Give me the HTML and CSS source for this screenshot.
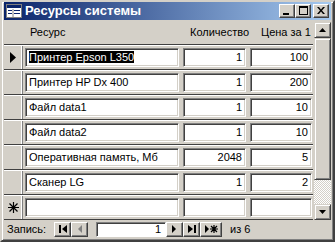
FILE: index.html
```html
<!DOCTYPE html>
<html lang="ru">
<head>
    <meta charset="UTF-8">
    <title>Ресурсы системы</title>
    <link rel="stylesheet" href="styles.css">
</head>
<body>
    <div class="window">
        <div class="titlebar">
            <svg class="appicon" width="16" height="14" viewBox="0 0 16 14">
                <rect x="0.5" y="0.5" width="15" height="13" fill="#fff" stroke="#808080"/>
                <rect x="1" y="1" width="14" height="3" fill="#0a246a"/>
                <line x1="2" y1="6.5" x2="6" y2="6.5" stroke="#0a246a"/>
                <line x1="8" y1="6.5" x2="14" y2="6.5" stroke="#0a246a"/>
                <line x1="2" y1="9.5" x2="6" y2="9.5" stroke="#0a246a"/>
                <line x1="8" y1="9.5" x2="14" y2="9.5" stroke="#0a246a"/>
                <line x1="7" y1="5" x2="7" y2="13" stroke="#808080"/>
            </svg>
            <span class="title">Ресурсы системы</span>
            <div class="capbuttons">
                <button class="capbtn"><svg width="8" height="8" viewBox="0 0 8 8"><rect x="0" y="6" width="6" height="2" fill="#000"/></svg></button>
                <button class="capbtn"><svg width="9" height="9" viewBox="0 0 9 9"><rect x="0.5" y="0.5" width="8" height="8" fill="none" stroke="#000"/><rect x="0" y="0" width="9" height="2" fill="#000"/></svg></button>
                <button class="capbtn close"><svg width="8" height="7" viewBox="0 0 8 7"><path d="M0 0h2l2 2.5L6 0h2L5 3.5 8 7H6L4 4.5 2 7H0l3-3.5z" fill="#000"/></svg></button>
            </div>
        </div>

        <div class="client">
            <div class="sheet">
                <div class="header">
                    <span class="lbl lbl-name">Ресурс</span>
                    <span class="lbl lbl-qty">Количество</span>
                    <span class="lbl lbl-price">Цена за 1</span>
                </div>

                <div class="row">
                    <div class="selector">
                        <svg width="6" height="11" viewBox="0 0 6 11"><path d="M0 0L6 5.5 0 11z" fill="#000"/></svg>
                    </div>
                    <div class="field name"><span class="selected">Принтер Epson L350</span></div>
                    <div class="field num qty">1</div>
                    <div class="field num price">100</div>
                </div>
                <div class="row">
                    <div class="selector"></div>
                    <div class="field name">Принтер HP Dx 400</div>
                    <div class="field num qty">1</div>
                    <div class="field num price">200</div>
                </div>
                <div class="row">
                    <div class="selector"></div>
                    <div class="field name">Файл data1</div>
                    <div class="field num qty">1</div>
                    <div class="field num price">10</div>
                </div>
                <div class="row">
                    <div class="selector"></div>
                    <div class="field name">Файл data2</div>
                    <div class="field num qty">1</div>
                    <div class="field num price">10</div>
                </div>
                <div class="row">
                    <div class="selector"></div>
                    <div class="field name">Оперативная память, Мб</div>
                    <div class="field num qty">2048</div>
                    <div class="field num price">5</div>
                </div>
                <div class="row">
                    <div class="selector"></div>
                    <div class="field name">Сканер LG</div>
                    <div class="field num qty">1</div>
                    <div class="field num price">2</div>
                </div>
                <div class="row newrow">
                    <div class="selector">
                        <svg width="11" height="11" viewBox="0 0 11 11"><path d="M5.5 0v11M0 5.5h11M1.5 1.5l8 8M9.5 1.5l-8 8" stroke="#000" stroke-width="1.2"/></svg>
                    </div>
                    <div class="field name"></div>
                    <div class="field num qty"></div>
                    <div class="field num price"></div>
                </div>
            </div>

            <div class="vscroll">
                <div class="sbtn"><svg width="7" height="4" viewBox="0 0 7 4"><path d="M3.5 0L7 4H0z" fill="#000"/></svg></div>
                <div class="thumb"></div>
                <div class="track"></div>
                <div class="sbtn"><svg width="7" height="4" viewBox="0 0 7 4"><path d="M0 0h7L3.5 4z" fill="#000"/></svg></div>
            </div>
        </div>

        <div class="navbar">
            <span class="navlabel">Запись:</span>
            <button class="navbtn first"><svg width="8" height="8" viewBox="0 0 8 8"><rect x="0" y="0" width="2" height="8" fill="#000"/><path d="M8 0v8L3 4z" fill="#000"/></svg></button>
            <button class="navbtn off"><svg width="5" height="8" viewBox="0 0 5 8"><path d="M5 0v8L1 4z" fill="#808080"/></svg></button>
            <div class="recbox">1</div>
            <button class="navbtn"><svg width="5" height="8" viewBox="0 0 5 8"><path d="M0 0v8L4 4z" fill="#000"/></svg></button>
            <button class="navbtn"><svg width="8" height="8" viewBox="0 0 8 8"><path d="M0 0v8L5 4z" fill="#000"/><rect x="6" y="0" width="2" height="8" fill="#000"/></svg></button>
            <button class="navbtn wide"><svg width="13" height="8" viewBox="0 0 13 8"><path d="M0 0v8L4 4z" fill="#000"/><path d="M9 0v8M5 4h8M6 1l6 6M12 1l-6 6" stroke="#000" stroke-width="1.2"/></svg></button>
            <span class="navcount">из 6</span>
        </div>
    </div>
</body>
</html>
```

FILE: styles.css
```css
* {
    margin: 0;
    padding: 0;
    box-sizing: border-box;
}
body {
    background-color: #d4d0c8;
    font-family: "Liberation Sans", Arial, sans-serif;
    font-size: 11px;
    color: #000;
}
.window {
    width: 335px;
    height: 242px;
    display: flex;
    flex-direction: column;
    background-color: #d4d0c8;
    border: 2px solid;
    border-color: #d4d0c8 #404040 #404040 #d4d0c8;
    box-shadow: inset 1px 1px #fff, inset -1px -1px #808080;
    padding: 0 2px 1px 2px;
}

/* title */
.titlebar {
    height: 18px;
    display: flex;
    align-items: center;
    background: linear-gradient(to right, #0a246a, #a6caf0);
    color: #fff;
    padding-left: 2px;
    padding-right: 2px;
}
.appicon {
    margin-right: 3px;
}
.title {
    font-weight: bold;
    font-size: 13px;
    flex: 1;
}
.capbuttons {
    display: flex;
}
.capbtn {
    width: 16px;
    height: 14px;
    display: flex;
    align-items: center;
    justify-content: center;
    background-color: #d4d0c8;
    border: 1px solid;
    border-color: #fff #404040 #404040 #fff;
    box-shadow: inset -1px -1px #808080;
}
.capbtn.close {
    margin-left: 2px;
}

/* form */
.client {
    flex: 1;
    display: flex;
}
.sheet {
    width: 310px;
    display: flex;
    flex-direction: column;
}
.header {
    height: 24px;
    position: relative;
}
.lbl {
    position: absolute;
    top: 6px;
}
.lbl-name { left: 26px; }
.lbl-qty { left: 186px; }
.lbl-price { left: 257px; }

.row {
    height: 25px;
    display: flex;
    align-items: flex-start;
    border-top: 1px solid #404040;
    box-shadow: inset 0 1px #fff;
}
.newrow {
    height: 26px;
    border-bottom: 1px solid #404040;
}
.selector {
    width: 19px;
    align-self: stretch;
    display: flex;
    align-items: center;
    justify-content: center;
    border-right: 1px solid #808080;
    box-shadow: inset -1px 0 #fff;
    margin-top: 1px;
    margin-right: 2px;
}
.field {
    height: 19px;
    margin-top: 3px;
    background-color: #fff;
    border: 1px solid;
    border-color: #808080 #fff #fff #808080;
    box-shadow: inset 1px 1px #404040, inset -1px -1px #d4d0c8;
    padding: 2px 3px 0 3px;
    white-space: nowrap;
    overflow: hidden;
}
.name { width: 154px; }
.qty { width: 63px; margin-left: 4px; }
.price { width: 62px; margin-left: 4px; }
.num {
    text-align: right;
}
.selected {
    background-color: #000;
    color: #fff;
}

/* scrollbar */
.vscroll {
    width: 17px;
    margin-left: 1px;
    margin-top: 2px;
    display: flex;
    flex-direction: column;
}
.sbtn {
    height: 16px;
    display: flex;
    align-items: center;
    justify-content: center;
    background-color: #d4d0c8;
    border: 1px solid;
    border-color: #d4d0c8 #404040 #404040 #d4d0c8;
    box-shadow: inset 1px 1px #fff, inset -1px -1px #808080;
}
.thumb {
    height: 142px;
    background-color: #d4d0c8;
    border: 1px solid;
    border-color: #d4d0c8 #404040 #404040 #d4d0c8;
    box-shadow: inset 1px 1px #fff, inset -1px -1px #808080;
}
.track {
    flex: 1;
    background: repeating-conic-gradient(#fff 0 25%, #d4d0c8 0 50%) 0 0 / 2px 2px;
}

/* navigation */
.navbar {
    height: 20px;
    display: flex;
    align-items: center;
    padding-left: 3px;
}
.navlabel {
    width: 47px;
}
.navbtn {
    width: 17px;
    height: 15px;
    display: flex;
    align-items: center;
    justify-content: center;
    background-color: #d4d0c8;
    border: 1px solid;
    border-color: #fff #404040 #404040 #fff;
    box-shadow: inset -1px -1px #808080;
}
.navbtn.wide {
    width: 22px;
}
.recbox {
    width: 70px;
    height: 15px;
    margin-left: 8px;
    background-color: #fff;
    border: 1px solid;
    border-color: #808080 #fff #fff #808080;
    box-shadow: inset 1px 1px #404040;
    text-align: right;
    padding-right: 4px;
    line-height: 13px;
}
.navcount {
    margin-left: 8px;
}
```
